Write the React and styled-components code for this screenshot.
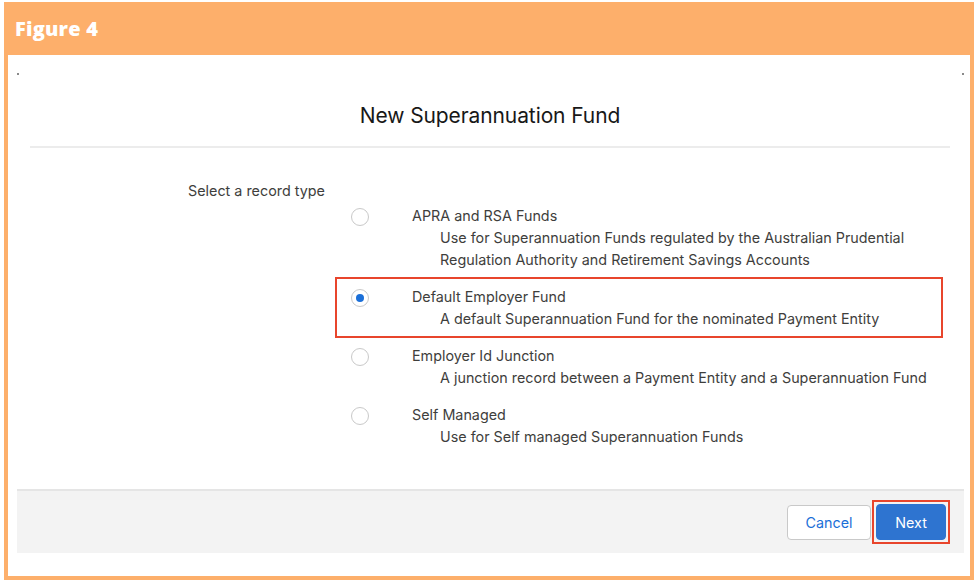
import React, { useState } from 'react';
import styled, { createGlobalStyle } from 'styled-components';

const GlobalStyle = createGlobalStyle`
  html, body {
    margin: 0;
    padding: 0;
    background: #ffffff;
  }
  body {
    font-family: Inter, "Liberation Sans", sans-serif;
  }
`;

const recordTypes = [
  {
    id: 'apra',
    label: 'APRA and RSA Funds',
    lines: [
      'Use for Superannuation Funds regulated by the Australian Prudential',
      'Regulation Authority and Retirement Savings Accounts',
    ],
  },
  {
    id: 'default',
    label: 'Default Employer Fund',
    lines: ['A default Superannuation Fund for the nominated Payment Entity'],
    highlight: true,
  },
  {
    id: 'junction',
    label: 'Employer Id Junction',
    lines: ['A junction record between a Payment Entity and a Superannuation Fund'],
  },
  {
    id: 'self',
    label: 'Self Managed',
    lines: ['Use for Self managed Superannuation Funds'],
  },
];

const App = () => {
  const [selected, setSelected] = useState('default');

  return (
    <>
      <GlobalStyle />
      <Page>
        <Frame>
          <FigureBar>Figure 4</FigureBar>
          <FrameBody>
            <Modal>
              <ModalHeader>
                <ModalTitle>New Superannuation Fund</ModalTitle>
              </ModalHeader>
              <ModalBody>
                <FieldLabel>Select a record type</FieldLabel>
                <OptionList>
                  {recordTypes.map((type) => (
                    <Option
                      key={type.id}
                      $highlight={type.highlight}
                      onClick={() => setSelected(type.id)}
                    >
                      <Radio $checked={selected === type.id} />
                      <OptionText>
                        <OptionLabel>{type.label}</OptionLabel>
                        {type.lines.map((line) => (
                          <OptionDesc key={line}>{line}</OptionDesc>
                        ))}
                      </OptionText>
                    </Option>
                  ))}
                </OptionList>
              </ModalBody>
              <ModalFooter>
                <CancelButton>Cancel</CancelButton>
                <Highlight>
                  <NextButton>Next</NextButton>
                </Highlight>
              </ModalFooter>
            </Modal>
          </FrameBody>
        </Frame>
      </Page>
    </>
  );
};

export default App;

const Page = styled.div`
  width: 976px;
  height: 584px;
  padding: 2px 2px 4px 4px;
  box-sizing: border-box;
`;

const Frame = styled.div`
  width: 970px;
  height: 578px;
  box-sizing: border-box;
  border: 4px solid #fdaf6b;
  border-top: none;
  display: flex;
  flex-direction: column;
`;

const FigureBar = styled.div`
  height: 53px;
  margin: 0 -4px;
  background: #fdaf6b;
  color: #ffffff;
  font-family: "Open Sans", Lato, sans-serif;
  font-weight: 800;
  font-size: 20px;
  line-height: 53px;
  padding-left: 11px;
  letter-spacing: 0.2px;
`;

const FrameBody = styled.div`
  flex: 1;
  background: #ffffff;
  padding: 18px 6px 23px 9px;
  display: flex;
`;

const Modal = styled.div`
  position: relative;
  flex: 1;
  display: flex;
  flex-direction: column;
  &::before,
  &::after {
    content: '';
    position: absolute;
    top: 0;
    width: 2px;
    height: 2px;
    background: #8a8a8a;
  }
  &::before {
    left: 0;
  }
  &::after {
    right: 0;
  }
`;

const ModalHeader = styled.div`
  height: 73px;
  margin: 0 14px 0 13px;
  border-bottom: 2px solid #ececec;
  display: flex;
  align-items: center;
  justify-content: center;
`;

const ModalTitle = styled.h2`
  margin: 12px 0 0;
  font-size: 21px;
  font-weight: 400;
  color: #181818;
  letter-spacing: -0.1px;
`;

const ModalBody = styled.div`
  flex: 1;
  padding: 34px 0 0 171px;
  color: #3e3e3c;
  font-size: 14.35px;
`;

const FieldLabel = styled.div`
  line-height: 18px;
`;

const OptionList = styled.div`
  display: flex;
  flex-direction: column;
  gap: 18px;
  margin-top: 8px;
  margin-left: 147px;
  width: 608px;
`;

const Option = styled.div`
  display: flex;
  align-items: flex-start;
  box-sizing: border-box;
  cursor: pointer;
  border: 2px solid ${(p) => (p.$highlight ? '#e8452c' : 'transparent')};
  padding: 10px 0 6px 14px;
  margin: -12px 0 -8px 0;
`;

const Radio = styled.span`
  width: 18px;
  height: 18px;
  border-radius: 50%;
  border: 1px solid #c9c9c9;
  box-sizing: border-box;
  background: #ffffff;
  flex-shrink: 0;
  display: flex;
  align-items: center;
  justify-content: center;
  &::after {
    content: '';
    width: 8px;
    height: 8px;
    border-radius: 50%;
    background: ${(p) => (p.$checked ? '#1b6fd8' : 'transparent')};
  }
`;

const OptionText = styled.div`
  margin-left: 43px;
  display: flex;
  flex-direction: column;
`;

const OptionLabel = styled.div`
  line-height: 22px;
  margin-top: -3px;
`;

const OptionDesc = styled.div`
  line-height: 22px;
  padding-left: 28px;
  white-space: nowrap;
`;

const ModalFooter = styled.div`
  height: 64px;
  box-sizing: border-box;
  background: #f3f3f3;
  border-top: 2px solid #e5e5e5;
  display: flex;
  align-items: center;
  justify-content: flex-end;
  gap: 1px;
  padding: 0 14px 0 0;
`;

const BaseButton = styled.button`
  height: 36px;
  border-radius: 4px;
  font-family: Inter, "Liberation Sans", sans-serif;
  font-size: 14.35px;
  cursor: pointer;
`;

const CancelButton = styled(BaseButton)`
  width: 84px;
  height: 35px;
  background: #ffffff;
  border: 1px solid #c9c9c9;
  color: #1b6fd8;
  margin-top: 1px;
`;

const Highlight = styled.div`
  border: 2px solid #e8452c;
  padding: 2px;
  display: flex;
`;

const NextButton = styled(BaseButton)`
  width: 70px;
  background: #2e74d0;
  border: 1px solid #2e74d0;
  color: #ffffff;
`;
